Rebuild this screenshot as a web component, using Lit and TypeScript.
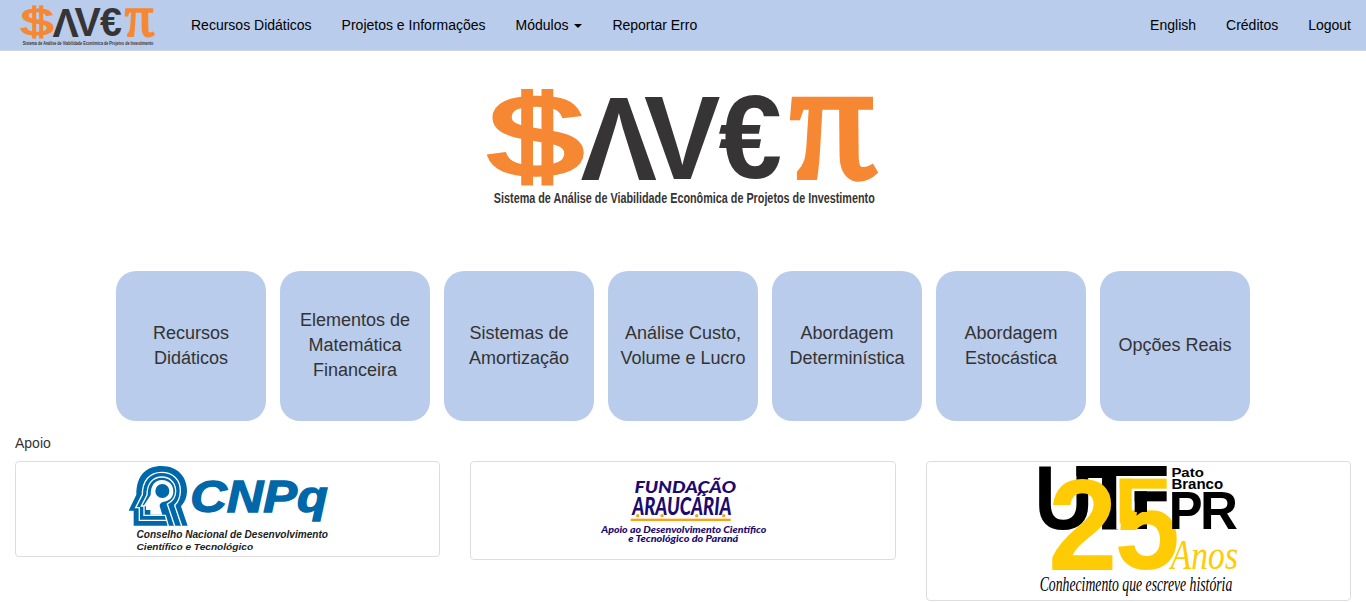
import { LitElement, html, svg, css } from "lit";
import { customElement } from "lit/decorators.js";

const SANS = '"Liberation Sans", Arial, sans-serif';
const SERIF = '"Liberation Serif", "Times New Roman", serif';

interface FitOptions {
  font?: string;
  weight?: string;
  italic?: boolean;
  fill?: string;
  stroke?: string;
  strokeWidth?: number;
  skew?: number;
}

const ctx = document.createElement("canvas").getContext("2d")!;

/** Sets text so that its ink fills the box from (x1, y1) to (x2, y2). */
function fit(text: string, x1: number, y1: number, x2: number, y2: number, o: FitOptions = {}) {
  const font = o.font ?? SANS;
  const weight = o.weight ?? "700";
  const style = o.italic ? "italic" : "normal";
  ctx.font = `${style} ${weight} 1000px ${font}`;
  const m = ctx.measureText(text);
  const left = m.actualBoundingBoxLeft / 10;
  const right = m.actualBoundingBoxRight / 10;
  const up = m.actualBoundingBoxAscent / 10;
  const down = m.actualBoundingBoxDescent / 10;
  const sx = (x2 - x1) / (left + right);
  const sy = (y2 - y1) / (up + down);
  const tx = x1 + left * sx;
  const ty = y1 + up * sy;
  return svg`<text transform="matrix(${sx} 0 ${o.skew ?? 0} ${sy} ${tx} ${ty})" font-size="100"
    font-family=${font} font-weight=${weight} font-style=${style} fill=${o.fill ?? "#000"}
    stroke=${o.stroke ?? "none"} stroke-width=${o.strokeWidth ?? 0}>${text}</text>`;
}

@customElement("save-logo")
class SaveLogo extends LitElement {
  static styles = css`
    :host { display: block; }
    svg { display: block; width: 100%; height: 100%; overflow: visible; }
  `;
  render() {
    const orange = "#f68833";
    const dark = "#373435";
    return html`<svg viewBox="486 88 392 119" preserveAspectRatio="none" role="img" aria-label="SAVEPI">
      ${fit("S", 487.5, 98, 582, 176, { weight: "400", fill: orange, stroke: orange, strokeWidth: 3 })}
      <rect x="521.2" y="89" width="11.8" height="96.5" fill=${orange} />
      <rect x="541.5" y="89" width="11.8" height="96.5" fill=${orange} />
      ${fit("Λ", 580.5, 97, 657.5, 180, { fill: dark })}
      ${fit("V", 644, 96, 721, 179, { fill: dark })}
      ${fit("€", 718.5, 95, 781, 180, { fill: dark })}
      ${fit("π", 799, 98.5, 885, 180, { font: SERIF, weight: "400", italic: true, skew: 0.3, fill: orange, stroke: orange, strokeWidth: 3.6 })}
      ${fit("Sistema de Análise de Viabilidade Econômica de Projetos de Investimento", 494, 192, 875, 206, { fill: dark })}
    </svg>`;
  }
}

@customElement("cnpq-logo")
class CnpqLogo extends LitElement {
  static styles = css`
    :host { display: block; width: 200px; height: 86px; }
    svg { display: block; width: 100%; height: 100%; overflow: visible; }
  `;
  render() {
    const blue = "#0067a9";
    return html`<svg viewBox="53 33 600 258" role="img" aria-label="CNPq">
      <g transform="translate(42 21)">
        <path fill=${blue} d="M13 146 L36 98 C36 40 65 12 112 12 C160 12 188 45 188 85 C188 108 180 122 170 133 L190 191 L28 191 L28 146Z" />
        <path fill="none" stroke="#fff" stroke-width="4" d="M172 192 L151 130 C162 119 168 105 168 86 C168 54 146 31 112 31 C76 31 54 56 54 98 L34 137 L45 137 L45 175 L126 175" />
        <path fill="none" stroke="#fff" stroke-width="4" d="M151 192 L129 126 C145 118 154 106 154 88 C154 62 136 45 113 45 C84 45 68 66 68 99 L51 132 L59 132 L59 160 L123 160 L132 192" />
        <path fill="#fff" d="M57 133 L79 99 C79 70 92 54 113 54 C134 54 147 69 147 88 C147 106 136 117 119 119 C108 121 104 127 107 136 L114 158 L78 158 L78 144 L65 144 L65 133Z" />
        <circle cx="114" cy="87" r="21" fill=${blue} />
      </g>
      ${fit("CNPq", 247, 75, 650, 200, { italic: true, fill: blue, stroke: blue, strokeWidth: 3 })}
      ${fit("Conselho Nacional de Desenvolvimento", 80, 227, 653, 250, { italic: true, fill: "#222" })}
      ${fit("Científico e Tecnológico", 80, 263, 428, 291, { italic: true, fill: "#222" })}
    </svg>`;
  }
}

@customElement("araucaria-logo")
class AraucariaLogo extends LitElement {
  static styles = css`
    :host { display: block; width: 200px; height: 89px; }
    svg { display: block; width: 100%; height: 100%; overflow: visible; }
  `;
  render() {
    const o = { font: "Lato, sans-serif", weight: "900", italic: true, fill: "#1c0a70" };
    return html`<svg viewBox="9 33 600 267" role="img" aria-label="Fundação Araucária">
      ${fit("FUNDAÇÃO", 165, 66, 467, 124, o)}
      ${fit("ARAUCÁRIA", 154, 110, 453, 182, o)}
      ${[173, 246, 350, 431].map((x) => svg`<circle cx=${x} cy="182" r="5" fill="#f5a31a" />`)}
      <rect x="152" y="191" width="300" height="7" fill="#f5a31a" />
      ${fit("Apoio ao Desenvolvimento Científico", 62, 210, 558, 238, o)}
      ${fit("e Tecnológico do Paraná", 145, 238, 477, 266, o)}
    </svg>`;
  }
}

@customElement("utfpr-logo")
class UtfprLogo extends LitElement {
  static styles = css`
    :host { display: block; width: 200px; height: 130px; }
    svg { display: block; width: 100%; height: 100%; overflow: visible; }
  `;
  render() {
    const gold = "#ffcb05";
    const script = { font: SERIF, weight: "400", italic: true };
    return html`<svg viewBox="55 33 600 390" role="img" aria-label="UTFPR 25 anos">
      ${fit("U", 55, 33, 208, 227)}
      ${fit("T", 170, 33, 372, 222)}
      <rect x="290" y="63" width="152" height="160" fill="#fff" />
      <rect x="170" y="33" width="271" height="30" />
      <rect x="345" y="170" width="37" height="52" />
      ${fit("2", 97, 71, 284, 345, { fill: gold })}
      ${fit("5", 290, 72, 472, 347, { fill: gold })}
      <rect x="291" y="63" width="180" height="103" fill="#fff" />
      <rect x="300" y="71" width="141" height="30" fill=${gold} />
      <rect x="300" y="71" width="36" height="134" fill=${gold} />
      <rect x="345" y="109" width="96" height="30" />
      <rect x="345" y="109" width="37" height="62" />
      ${fit("P", 457, 110, 545, 222)}
      ${fit("R", 551, 110, 652, 222)}
      ${fit("Pato", 458, 37, 551, 66)}
      ${fit("Branco", 458, 71, 609, 102)}
      ${fit("Anos", 447, 260, 652, 345, { ...script, fill: gold })}
      ${fit("Conhecimento que escreve história", 62, 366, 637, 422, script)}
    </svg>`;
  }
}

const MODULES = [
  "Recursos Didáticos",
  "Elementos de Matemática Financeira",
  "Sistemas de Amortização",
  "Análise Custo, Volume e Lucro",
  "Abordagem Determinística",
  "Abordagem Estocástica",
  "Opções Reais",
];

@customElement("app-root")
class AppRoot extends LitElement {
  static styles = css`
    :host {
      display: block;
      background: #fff;
      color: #333;
      font: 14px/20px "Liberation Sans", Arial, sans-serif;
    }
    a { color: inherit; text-decoration: none; }
    .navbar {
      display: flex;
      height: 50px;
      background: #b9cceb;
      border-bottom: 1px solid #cbd7e3;
      color: #000;
    }
    .brand { width: 135px; height: 41px; margin: 5px 21px 0 20px; }
    .navbar a { padding: 15px; white-space: nowrap; }
    .end { display: flex; margin-left: auto; }
    .caret {
      display: inline-block;
      margin-left: 2px;
      vertical-align: middle;
      border-top: 4px solid;
      border-left: 4px solid transparent;
      border-right: 4px solid transparent;
    }
    .hero { width: 392px; height: 119px; margin: 37px 0 64px calc(50% - 197px); }
    .tiles { display: flex; justify-content: center; gap: 14px; }
    .tile {
      box-sizing: border-box;
      display: flex;
      align-items: center;
      justify-content: center;
      width: 150px;
      height: 150px;
      padding: 0 10px 1px;
      border-radius: 20px;
      background: #b9cceb;
      font-size: 18px;
      line-height: 25px;
      text-align: center;
    }
    .support { padding: 12px 15px 0; }
    .cards {
      display: grid;
      grid-template-columns: repeat(3, 1fr);
      align-items: start;
      gap: 30px;
      margin-top: 8px;
    }
    .card {
      display: flex;
      justify-content: center;
      padding: 4px;
      border: 1px solid #ddd;
      border-radius: 4px;
    }
  `;
  render() {
    return html`
      <nav class="navbar">
        <save-logo class="brand"></save-logo>
        <a href="#">Recursos Didáticos</a>
        <a href="#">Projetos e Informações</a>
        <a href="#">Módulos <span class="caret"></span></a>
        <a href="#">Reportar Erro</a>
        <div class="end">
          <a href="#">English</a>
          <a href="#">Créditos</a>
          <a href="#">Logout</a>
        </div>
      </nav>
      <save-logo class="hero"></save-logo>
      <div class="tiles">${MODULES.map((m) => html`<a class="tile" href="#">${m}</a>`)}</div>
      <section class="support">
        <div>Apoio</div>
        <div class="cards">
          <div class="card"><cnpq-logo></cnpq-logo></div>
          <div class="card"><araucaria-logo></araucaria-logo></div>
          <div class="card"><utfpr-logo></utfpr-logo></div>
        </div>
      </section>
    `;
  }
}
